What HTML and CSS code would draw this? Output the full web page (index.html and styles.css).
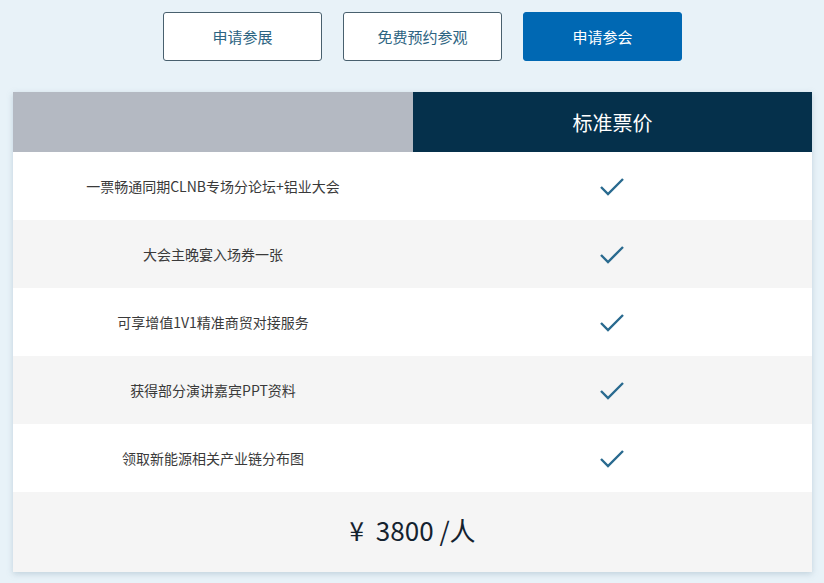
FILE: index.html
```html
<!DOCTYPE html>
<html lang="zh-CN">
<head>
    <meta charset="UTF-8">
    <title>票价</title>
    <link rel="stylesheet" href="styles.css">
</head>
<body>
    <div class="btn-bar">
        <a class="btn">申请参展</a>
        <a class="btn">免费预约参观</a>
        <a class="btn btn-main">申请参会</a>
    </div>
    <div class="price-table">
        <div class="row head">
            <div class="cell"></div>
            <div class="cell">标准票价</div>
        </div>
        <div class="row">
            <div class="cell">一票畅通同期CLNB专场分论坛+铝业大会</div>
            <div class="cell"><svg class="check" viewBox="0 0 26 20"><path d="M2 11 L9 18 L24 3"/></svg></div>
        </div>
        <div class="row">
            <div class="cell">大会主晚宴入场券一张</div>
            <div class="cell"><svg class="check" viewBox="0 0 26 20"><path d="M2 11 L9 18 L24 3"/></svg></div>
        </div>
        <div class="row">
            <div class="cell">可享增值1V1精准商贸对接服务</div>
            <div class="cell"><svg class="check" viewBox="0 0 26 20"><path d="M2 11 L9 18 L24 3"/></svg></div>
        </div>
        <div class="row">
            <div class="cell">获得部分演讲嘉宾PPT资料</div>
            <div class="cell"><svg class="check" viewBox="0 0 26 20"><path d="M2 11 L9 18 L24 3"/></svg></div>
        </div>
        <div class="row">
            <div class="cell">领取新能源相关产业链分布图</div>
            <div class="cell"><svg class="check" viewBox="0 0 26 20"><path d="M2 11 L9 18 L24 3"/></svg></div>
        </div>
        <div class="price"><span class="yen">¥</span>3800 /人</div>
    </div>
</body>
</html>
```

FILE: styles.css
```css
*{
    margin: 0;
    padding: 0;
    box-sizing: border-box;
}
body{
    background: #e8f2f8;
    font-family: "Noto Sans CJK SC", "Noto Sans", sans-serif;
    width: 824px;
    height: 583px;
    overflow: hidden;
}
.btn-bar{
    display: flex;
    justify-content: center;
    gap: 21px;
    padding: 12px 0 0 21px;
}
.btn{
    display: block;
    width: 159px;
    height: 49px;
    line-height: 47px;
    text-align: center;
    font-size: 15px;
    color: #2d6482;
    background: #fff;
    border: 1px solid #48606e;
    border-radius: 3px;
}
.btn-main{
    background: #0068b3;
    border-color: #0068b3;
    color: #fff;
}
.price-table{
    margin: 31px 0 0 13px;
    width: 799px;
    background: #fff;
    box-shadow: 0 2px 6px rgba(120, 150, 170, 0.35);
}
.row{
    display: flex;
    height: 68px;
}
.row:nth-child(odd){
    background: #f5f5f5;
}
.row .cell{
    flex: 1;
    display: flex;
    align-items: center;
    justify-content: center;
    font-size: 14px;
    color: #3a3a3a;
}
.row .cell:first-child{
    width: 400px;
    flex: none;
}
.row.head{
    height: 60px;
}
.row.head .cell:first-child{
    background: #b4b9c2;
}
.row.head .cell:last-child{
    background: #05304b;
    color: #fff;
    font-size: 20px;
}
.check{
    width: 26px;
    height: 20px;
    margin-left: -2px;
}
.check path{
    fill: none;
    stroke: #296a8f;
    stroke-width: 2.4;
}
.price{
    height: 80px;
    line-height: 76px;
    text-align: center;
    background: #f5f5f5;
    font-size: 26px;
    color: #14222f;
}
.yen{
    margin-right: 12px;
}
```
